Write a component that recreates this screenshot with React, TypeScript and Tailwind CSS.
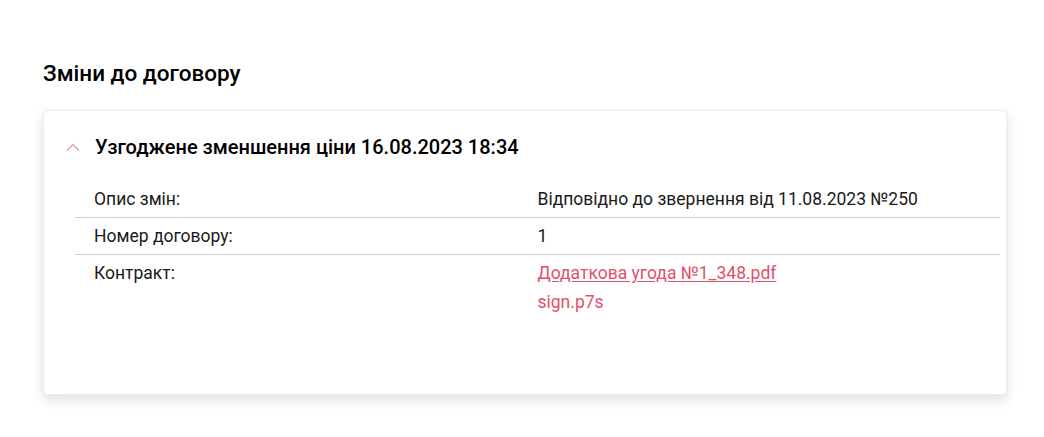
import React from 'react';

const rows = [
  { label: 'Опис змін:', value: 'Відповідно до звернення від 11.08.2023 №250' },
  { label: 'Номер договору:', value: '1' },
];

export default function App() {
  return (
    <div className="min-h-screen bg-white px-[43px] pt-[58px] font-['Roboto',sans-serif] text-[#1a1a1a]">
      <h2 className="text-[22.5px] font-medium leading-[30px] text-black">Зміни до договору</h2>

      <div className="mt-[22px] w-[964px] rounded-[4px] border border-[#ececec] bg-white pb-[74px] pl-[19px] pr-[6px] pt-[22px] shadow-[0_5px_12px_rgba(0,0,0,0.13)]">
        <div className="flex items-center gap-[15px]">
          <svg width="14" height="9" viewBox="0 0 14 9" fill="none" className="ml-[3px]">
            <path d="M1 7.5L7 1.5L13 7.5" stroke="#eba1ac" strokeWidth="1.5" />
          </svg>
          <h3 className="text-[20px] font-medium leading-[28px] text-black">
            Узгоджене зменшення ціни 16.08.2023 18:34
          </h3>
        </div>

        <div className="ml-[12px] mt-[20px] text-[17.5px] leading-[24px]">
          {rows.map((r) => (
            <div key={r.label} className="grid grid-cols-2 border-b border-[#d0d0d0] py-[6px]">
              <div className="pl-[19px]">{r.label}</div>
              <div>{r.value}</div>
            </div>
          ))}
          <div className="grid grid-cols-2 py-[6px]">
            <div className="pl-[19px]">Контракт:</div>
            <div className="flex flex-col items-start">
              <a href="#" className="text-[#e0516a] underline underline-offset-[2px]">Додаткова угода №1_348.pdf</a>
              <a href="#" className="mt-[5px] text-[#e0516a]">sign.p7s</a>
            </div>
          </div>
        </div>
      </div>
    </div>
  );
}
